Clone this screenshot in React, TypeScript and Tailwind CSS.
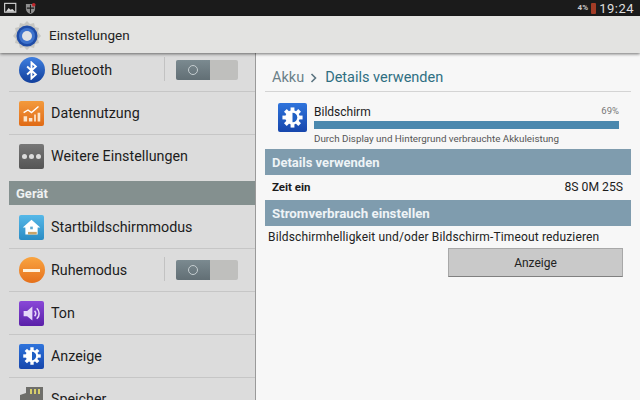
const font = { fontFamily: 'Roboto, "Liberation Sans", sans-serif' };

function Toggle() {
  return (
    <div className="flex h-full items-center">
      <div className="-mt-[2px] mr-[11px] h-[24px] w-px bg-[#c2c2c2]" />
      <div className="mr-[17px] flex h-[20px] w-[62px] overflow-hidden rounded-[2px] bg-[#bfbfbd]">
        <div className="flex h-full w-[34px] items-center justify-center bg-gradient-to-b from-[#7b8a90] to-[#626f75]">
          <div className="h-[10px] w-[10px] rounded-full border border-[#c5cdd0]" />
        </div>
      </div>
    </div>
  );
}

// brightness gear, dark half on the right
function Gear({ className }: { className?: string }) {
  return (
    <svg viewBox="0 0 24 24" className={className}>
      {[0, 45, 90, 135, 180, 225, 270, 315].map((a) => (
        <rect key={a} x="10" y="1.500" width="4" height="5" fill="#fff" transform={`rotate(${a} 12 12)`} />
      ))}
      <circle cx="12" cy="12" r="7.500" fill="#fff" />
      <path fill="#1f5fc4" d="M12 7a5 5 0 0 1 0 10z" />
    </svg>
  );
}

function Row({ icon, label, toggle, last }: { icon: React.ReactNode; label: string; toggle?: boolean; last?: boolean }) {
  return (
    <div className={`flex h-[43px] shrink-0 items-center border-b ${last ? 'border-transparent' : 'border-[#c6c6c6]'}`}>
      <div className="flex w-[42px] justify-center pl-[3px]">{icon}</div>
      <div className="flex-1 pt-[1px] text-[14.300px] text-[#1c1c1c]">{label}</div>
      {toggle && <Toggle />}
    </div>
  );
}

const squareIcon = 'flex h-[25px] w-[25px] items-center justify-center rounded-[2px]';

export default function App() {
  return (
    <div className="flex h-[400px] w-[640px] flex-col overflow-hidden bg-[#dcdcdc]" style={font}>
      {/* status bar */}
      <div className="flex h-[16px] shrink-0 items-center bg-[#1b1b1b] px-[4px] text-white">
        <svg viewBox="0 0 14 12" className="h-[12px] w-[13px]">
          <rect x="0.7" y="1" width="12" height="9.5" fill="none" stroke="#d8d8d8" strokeWidth="1.2" />
          <path fill="#d8d8d8" d="M2 10l3-4 2 2 2-1 3 3z" />
        </svg>
        <svg viewBox="0 0 12 12" className="ml-[8px] h-[13px] w-[11px]">
          <path fill="#8f8f8f" d="M1 1h10v5c0 3-2 5-5 6-3-1-5-3-5-6z" />
          <path fill="#1b1b1b" d="M5.4 2h1.2v9H5.4zM2 5h8v1.2H2z" />
          <circle cx="9.5" cy="2" r="2" fill="#c0282d" />
        </svg>
        <div className="ml-auto text-[8px] font-bold text-[#c8c8c8]">4%</div>
        <div className="ml-[3px] h-[11px] w-[5px] rounded-[1px] bg-[#a33c26]" />
        <div className="ml-[3px] mr-[2px] text-[13px] leading-none tracking-[0.5px] text-[#dedede]">19:24</div>
      </div>

      {/* action bar */}
      <div className="relative z-10 flex h-[37px] shrink-0 items-center bg-[#e3e3e1] pt-[2px] shadow-[0_1px_3px_rgba(0,0,0,0.55)]">
        <svg viewBox="0 0 32 32" className="ml-[11px] h-[32px] w-[32px]">
          <path
            fill="#c6c6c2"
            d="M16 1l3 3 4-1 1 4 4 1-1 4 3 4-3 3 1 4-4 1-1 4-4-1-3 3-3-3-4 1-1-4-4-1 1-4-3-3 3-4-1-4 4-1 1-4 4 1z"
          />
          <circle cx="16" cy="16" r="10.500" fill="#1f4ca6" />
          <circle cx="16" cy="16" r="8" fill="#3d72cc" />
          <circle cx="16" cy="16" r="5" fill="#dfe1e4" />
        </svg>
        <div className="ml-[6px] text-[13.500px] text-[#222]">Einstellungen</div>
      </div>

      <div className="flex min-h-0 flex-1">
        {/* settings list */}
        <div className="-mt-[4px] flex w-[255px] shrink-0 flex-col overflow-hidden">
          <div className="pl-[9px]">
            <Row
              label="Bluetooth"
              toggle
              icon={
                <div className="flex h-[26px] w-[26px] items-center justify-center rounded-full bg-gradient-to-b from-[#3f7fe0] to-[#123f9c]">
                  <svg viewBox="0 0 24 24" className="h-[19px] w-[19px]" fill="none" stroke="#fff" strokeWidth="2.4">
                    <path d="M6.500 7l11 10-5.500 5V2l5.500 5-11 10" />
                  </svg>
                </div>
              }
            />
            <Row
              label="Datennutzung"
              icon={
                <div className={`${squareIcon} bg-gradient-to-b from-[#f39a3c] to-[#e06a14]`}>
                  <svg viewBox="0 0 24 24" className="h-[21px] w-[21px]">
                    <path fill="#fbe3c8" d="M3 15h4v6H3zM9 17h4v4H9zM15 13h2v8h-2zM19 11h3v10h-3z" />
                    <path fill="none" stroke="#fff" strokeWidth="1.6" d="M3 11l5-3 4 3 8-7" />
                  </svg>
                </div>
              }
            />
            <Row
              label="Weitere Einstellungen"
              icon={
                <div className={`${squareIcon} gap-[2px] bg-gradient-to-b from-[#777] to-[#555]`}>
                  <div className="h-[5px] w-[5px] rounded-full bg-[#dcdcdc]" />
                  <div className="h-[5px] w-[5px] rounded-full bg-[#dcdcdc]" />
                  <div className="h-[5px] w-[5px] rounded-full bg-[#dcdcdc]" />
                </div>
              }
              last
            />
            <div className="mb-[1px] mt-[3px] flex h-[24px] items-center bg-[#84908f] pl-[7px] pt-[1px] text-[13px] font-bold text-[#eef1f1]">
              Gerät
            </div>
            <Row
              label="Startbildschirmmodus"
              icon={
                <div className={`${squareIcon} bg-gradient-to-b from-[#55b8e8] to-[#2a8cc4]`}>
                  <svg viewBox="0 0 24 24" className="h-[21px] w-[21px]">
                    <path fill="#fff" d="M12 3L2 12h3v8h14v-8h3z" />
                    <path fill="#c9a468" d="M8 17h10v3H8z" />
                    <path fill="#5fa9d0" d="M10.500 11h3v3h-3z" />
                  </svg>
                </div>
              }
            />
            <Row
              label="Ruhemodus"
              toggle
              icon={
                <div className="flex h-[26px] w-[26px] items-center justify-center rounded-full bg-gradient-to-b from-[#f9a440] to-[#e5701a]">
                  <div className="h-[3px] w-[17px] bg-[#fff2dd]" />
                </div>
              }
            />
            <Row
              label="Ton"
              icon={
                <div className={`${squareIcon} bg-gradient-to-b from-[#8a48d8] to-[#5a1fa8]`}>
                  <svg viewBox="0 0 24 24" className="h-[21px] w-[21px]">
                    <path fill="#e6d8f8" d="M3 9h4l6-5v16l-6-5H3z" />
                    <path fill="none" stroke="#e6d8f8" strokeWidth="1.8" d="M15.500 9a4 4 0 0 1 0 6M18 6a8 8 0 0 1 0 12" />
                  </svg>
                </div>
              }
            />
            <Row
              label="Anzeige"
              icon={
                <div className={`${squareIcon} bg-gradient-to-b from-[#2f74dc] to-[#1746ac]`}>
                  <Gear className="h-[20px] w-[20px]" />
                </div>
              }
            />
            <Row
              label="Speicher"
              last
              icon={
                <svg viewBox="0 0 25 25" className="h-[25px] w-[25px]">
                  <path fill="#6e6e6a" d="M7 0h17v25H1V8l6-2z" />
                  <path fill="#d8cf6a" d="M11 2h2v5h-2zM15 2h2v5h-2zM19 2h2v5h-2z" />
                </svg>
              }
            />
          </div>
        </div>

        {/* detail panel */}
        <div className="flex flex-1 flex-col border-l border-[#9a9a9a] bg-[#f7f7f7] pl-[9px] pr-[9px]">
          <div className="flex h-[39px] shrink-0 items-center border-b border-[#d4d4d4] pl-[7px] pt-[11px] text-[14.500px]">
            <span className="text-[#6b8088]">Akku</span>
            <span className="ml-[6px] mr-[7px]">
              <svg viewBox="0 0 8 10" className="h-[10px] w-[8px]" fill="none" stroke="#5b7480" strokeWidth="1.6">
                <path d="M1.500 1l4 4-4 4" />
              </svg>
            </span>
            <span className="text-[#2f6f82]">Details verwenden</span>
          </div>

          <div className="flex h-[57px] shrink-0 pl-[13px] pr-[12px] pt-[11px]">
            <div className="flex h-[29px] w-[29px] shrink-0 items-center justify-center rounded-[2px] bg-gradient-to-b from-[#2f74dc] to-[#1746ac]">
              <Gear className="h-[23px] w-[23px]" />
            </div>
            <div className="ml-[7px] flex-1">
              <div className="flex h-[17px] items-center justify-between">
                <span className="text-[12px] text-[#1c1c1c]">Bildschirm</span>
                <span className="text-[9.500px] text-[#777]">69%</span>
              </div>
              <div className="mt-[1px] h-[8px] bg-[#4a88ae]" />
              <div className="mt-[3px] whitespace-nowrap text-[9.800px] leading-[14px] text-[#555]">
                Durch Display und Hintergrund verbrauchte Akkuleistung
              </div>
            </div>
          </div>

          <div className="flex h-[26px] shrink-0 items-center bg-[#7f9cae] pl-[7px] pt-[1px] text-[13px] font-bold text-[#eef3f6]">
            Details verwenden
          </div>
          <div className="flex h-[25px] shrink-0 items-center justify-between pl-[7px] pr-[8px] text-[12.200px] text-[#1c1c1c]">
            <span className="text-[11.500px] font-bold">Zeit ein</span>
            <span>8S 0M 25S</span>
          </div>
          <div className="flex h-[26px] shrink-0 items-center bg-[#7f9cae] pl-[7px] pt-[1px] text-[13.300px] font-bold text-[#eef3f6]">
            Stromverbrauch einstellen
          </div>
          <div className="flex h-[22px] shrink-0 items-center whitespace-nowrap pl-[3px] text-[12px] tracking-[0.15px] text-[#222]">
            Bildschirmhelligkeit und/oder Bildschirm-Timeout reduzieren
          </div>
          <div className="flex justify-end pr-[8px]">
            <div className="flex h-[29px] w-[175px] items-center justify-center border border-[#a8a8a8] border-b-[#808080] bg-[#c9c9c9] text-[12px] text-[#222]">
              Anzeige
            </div>
          </div>
        </div>
      </div>
    </div>
  );
}
